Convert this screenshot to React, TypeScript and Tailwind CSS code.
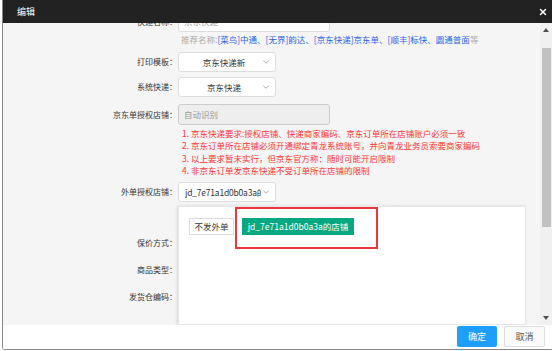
import React from 'react';
import { ChevronDown, X } from 'lucide-react';

const Label: React.FC<{ children: React.ReactNode }> = ({ children }) => (
  <div className="w-[174px] shrink-0 text-right text-[8px] leading-[12px] text-[#333]">{children}</div>
);

const Select: React.FC<{ value: string; left?: boolean }> = ({ value, left }) => (
  <div className="ml-[1px] flex h-[20px] w-[98px] items-center overflow-hidden rounded-[3px] border border-[#ddd] bg-white text-[8.5px] text-[#333]">
    {left ? (
      <span className="ml-[6px] w-[79px] overflow-hidden whitespace-nowrap tracking-[-0.2px]">{value}</span>
    ) : (
      <span className="flex-1 pl-[8px] text-center whitespace-nowrap">{value}</span>
    )}
    <ChevronDown className="mr-[4px] ml-auto h-[10px] w-[10px] shrink-0 text-[#777]" strokeWidth={1.5} />
  </div>
);

const notes = [
  '1. 京东快递要求:授权店铺、快递商家编码、京东订单所在店铺账户必须一致',
  '2. 京东订单所在店铺必须开通绑定青龙系统账号，并向青龙业务员索要商家编码',
  '3. 以上要求暂未实行，但京东官方称：随时可能开启限制',
  '4. 非京东订单发京东快递不受订单所在店铺的限制',
];

const App: React.FC = () => {
  return (
    <div className="h-[351px] w-[554px] overflow-hidden bg-white font-['Noto_Sans_CJK_SC',sans-serif]">
      <div className="ml-[2px] flex w-[550px] flex-col rounded-bl-[3px] border-b border-l border-[#888]">
        {/* title */}
        <div className="flex h-[23px] items-center justify-between bg-[#222] pl-[14px] pr-[4px]">
          <span className="text-[9px] text-white">编辑</span>
          <X className="h-[10px] w-[10px] text-white" strokeWidth={3.5} />
        </div>

        {/* body */}
        <div className="flex h-[302px] bg-[#f5f5f5]">
          <div className="relative flex-1 overflow-hidden">
            <div className="-mt-[12px] flex flex-col">
              <div className="flex items-center">
                <Label>快递名称：</Label>
                <div className="ml-[1px] flex h-[21px] w-[152px] items-center rounded-[3px] border border-[#ddd] bg-white pl-[5px] text-[8.5px] text-[#999]">
                  京东快递
                </div>
              </div>
              <div className="mt-[1px] h-[12px] whitespace-nowrap pl-[178px] text-[8.5px] leading-[12px] text-[#aaa]">
                推荐名称:
                <span className="text-[#2d5fe6]">[菜鸟]中通、[无界]韵达、[京东快递]京东单、[顺丰]标快、圆通普面</span>
                等
              </div>

              <div className="mt-[7px] flex items-center">
                <Label>打印模板：</Label>
                <Select value="京东快递新" />
              </div>
              <div className="mt-[5px] flex items-center">
                <Label>系统快递：</Label>
                <Select value="京东快递" />
              </div>
              <div className="mt-[7px] flex items-center">
                <Label>京东单授权店铺：</Label>
                <div className="ml-[1px] flex h-[21px] w-[152px] items-center rounded-[3px] border border-[#ccc] bg-[#eee] pl-[5px] text-[8.5px] text-[#999]">
                  自动识别
                </div>
              </div>

              <div className="mt-[2px] flex flex-col pl-[179px] text-[8.5px] leading-[12.3px] text-[#f33]">
                {notes.map((n) => (
                  <div key={n} className="whitespace-nowrap">{n}</div>
                ))}
              </div>

              <div className="mt-[6px] flex items-center">
                <Label>外单授权店铺：</Label>
                <Select value="jd_7e71a1d0b0a3a的店铺" left />
              </div>
              <div className="mt-[1px] whitespace-nowrap pl-[179px] text-[8.5px] leading-[12px] text-[#f33]">
                请选择外单授权店铺，不选则外单使用京东单授权店铺发货，外单可选择不发外单
              </div>

              <div className="mt-[14px] flex h-[27px] items-center">
                <Label>保价方式：</Label>
              </div>
              <div className="flex h-[27px] items-center">
                <Label>商品类型：</Label>
              </div>
              <div className="flex h-[27px] items-center">
                <Label>发货仓编码：</Label>
              </div>
            </div>

            {/* dropdown panel */}
            <div className="absolute bottom-0 left-[175px] top-[183px] w-[348px] border border-[#e6e6e6] bg-white shadow-[-1px_0_3px_rgba(0,0,0,0.12)]">
              <div className="flex gap-[8px] pl-[10px] pt-[11px]">
                <div className="flex h-[17px] w-[45px] items-center justify-center border border-[#ddd] bg-white text-[8.5px] text-[#333]">
                  不发外单
                </div>
                <div className="flex h-[17px] w-[112px] items-center justify-center bg-[#06a882] text-[8.5px] text-white">
                  jd_7e71a1d0b0a3a的店铺
                </div>
              </div>
              <div className="absolute left-[56px] top-0 h-[42px] w-[143px] border-2 border-[#e8383a]" />
            </div>
          </div>

          {/* scrollbar */}
          <div className="flex w-[12px] flex-col items-center bg-[#f0f0f0]">
            <div className="flex h-[14px] items-center justify-center">
              <div className="h-0 w-0 border-x-[3px] border-b-[4px] border-x-transparent border-b-[#505050]" />
            </div>
            <div className="mt-[11px] h-[179px] w-[9px] bg-[#c1c1c1]" />
            <div className="flex-1" />
            <div className="flex h-[14px] items-center justify-center">
              <div className="h-0 w-0 border-x-[3px] border-t-[4px] border-x-transparent border-t-[#505050]" />
            </div>
          </div>
        </div>

        {/* footer */}
        <div className="flex h-[24px] items-start justify-end gap-[7px] bg-white pr-[7px] pt-[1px]">
          <div className="flex h-[21px] w-[40px] items-center justify-center rounded-[2px] bg-[#1e9fff] text-[9px] text-white">
            确定
          </div>
          <div className="flex h-[21px] w-[41px] items-center justify-center rounded-[2px] border border-[#ddd] bg-[#fafafa] text-[9px] text-[#555]">
            取消
          </div>
        </div>
      </div>
    </div>
  );
};

export default App;
